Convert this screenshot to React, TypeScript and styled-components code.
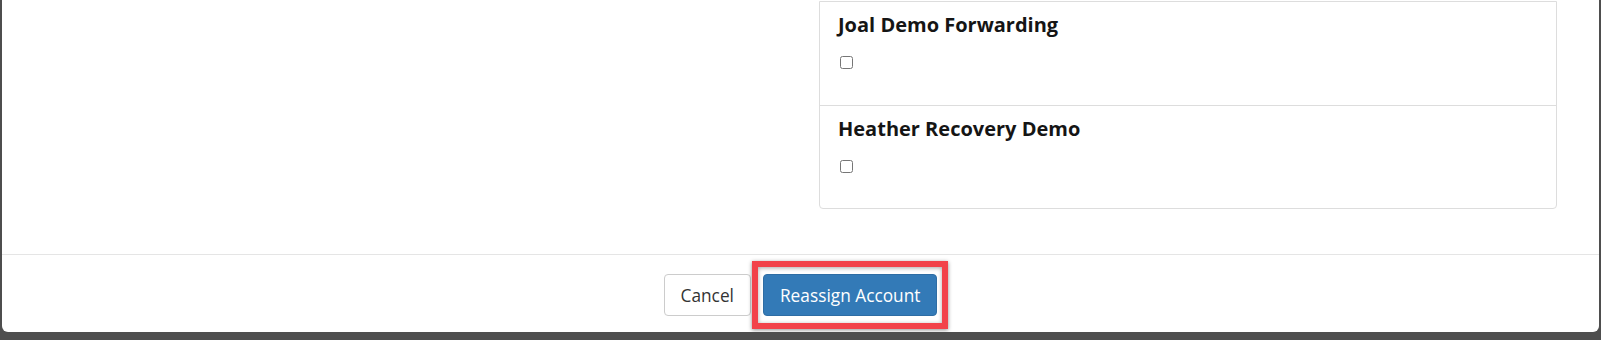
import styled, { createGlobalStyle } from 'styled-components'

const accounts = ['Joal Demo Forwarding', 'Heather Recovery Demo']

const GlobalStyle = createGlobalStyle`
  html, body {
    margin: 0;
    padding: 0;
    background: #4e4e4e;
    font-family: "Open Sans", "Liberation Sans", sans-serif;
  }
`

export default function App() {
  return (
    <>
      <GlobalStyle />
      <Modal>
        <Body>
          <Column />
          <List>
            {accounts.map((name) => (
              <Row key={name}>
                <Title>{name}</Title>
                <Check type="checkbox" />
              </Row>
            ))}
          </List>
        </Body>
        <Footer>
          <Button>Cancel</Button>
          <Highlight>
            <Button $primary>Reassign Account</Button>
            <Marker />
          </Highlight>
        </Footer>
      </Modal>
    </>
  )
}

const Modal = styled.div({
  margin: '0 2px',
  height: 332,
  background: '#fff',
  borderRadius: '0 0 6px 6px',
  display: 'flex',
  flexDirection: 'column',
  boxSizing: 'border-box',
})

const Body = styled.div({
  flex: 1,
  display: 'grid',
  gridTemplateColumns: '1fr 738px',
  padding: '1px 42px 0 45px',
  alignItems: 'start',
})

const Column = styled.div({})

const List = styled.div({
  border: '1px solid #dddddd',
  borderRadius: '0 0 4px 4px',
})

const Row = styled.div({
  height: 103,
  padding: '11px 18px 0',
  boxSizing: 'border-box',
  '& + &': {
    borderTop: '1px solid #dddddd',
  },
})

const Title = styled.h4({
  margin: 0,
  fontSize: 20,
  lineHeight: '24px',
  fontWeight: 700,
  color: '#151515',
})

const Check = styled.input({
  display: 'block',
  width: 13,
  height: 13,
  margin: '19px 0 0 2px',
})

const Footer = styled.div({
  height: 78,
  borderTop: '1px solid #e5e5e5',
  boxSizing: 'border-box',
  display: 'flex',
  justifyContent: 'center',
  alignItems: 'flex-start',
  gap: 12,
  paddingTop: 19,
})

const Button = styled.button<{ $primary?: boolean }>(({ $primary }) => ({
  height: 42,
  padding: '0 16px',
  fontFamily: '"Open Sans", "Liberation Sans", sans-serif',
  fontSize: 17.3,
  borderRadius: 4,
  border: `1px solid ${$primary ? '#2e6da4' : '#cccccc'}`,
  background: $primary ? '#337ab7' : '#ffffff',
  color: $primary ? '#ffffff' : '#333333',
  boxSizing: 'border-box',
  cursor: 'pointer',
}))

const Highlight = styled.span({
  position: 'relative',
  display: 'inline-block',
})

const Marker = styled.span({
  position: 'absolute',
  left: -11,
  right: -11,
  top: -13,
  bottom: -13,
  border: '6px solid #f2424a',
  boxShadow: '0 1px 4px rgba(0,0,0,0.45), inset 0 1px 4px rgba(0,0,0,0.35)',
  pointerEvents: 'none',
})
